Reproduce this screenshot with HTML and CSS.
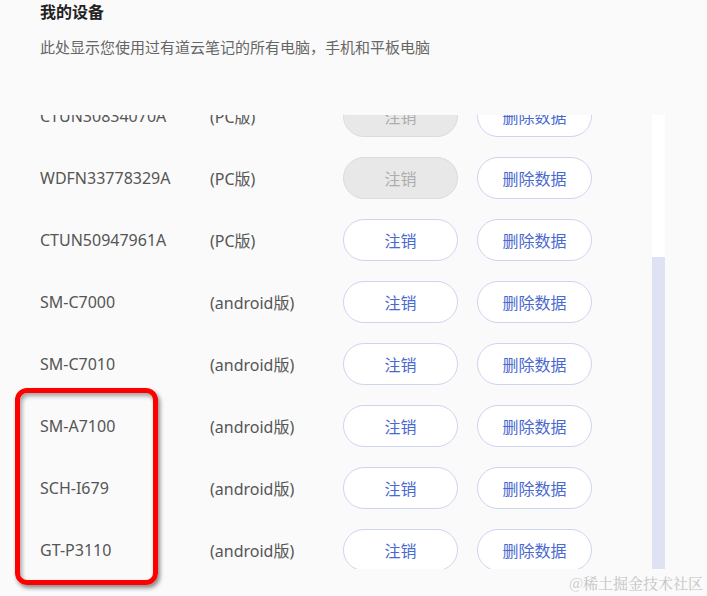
FILE: index.html
```html
<!DOCTYPE html>
<html lang="zh-CN">
<head>
  <meta charset="UTF-8">
  <title>我的设备</title>
  <link rel="stylesheet" href="styles.css">
</head>
<body>
  <header class="head">
    <h1>我的设备</h1>
    <p>此处显示您使用过有道云笔记的所有电脑，手机和平板电脑</p>
  </header>

  <div class="panel">
    <div class="viewport">
      <ul class="devices">
        <li><span class="name">CTUN30834070A</span><span class="kind">(PC版)</span><button class="off">注销</button><button>删除数据</button></li>
        <li><span class="name">WDFN33778329A</span><span class="kind">(PC版)</span><button class="off">注销</button><button>删除数据</button></li>
        <li><span class="name">CTUN50947961A</span><span class="kind">(PC版)</span><button>注销</button><button>删除数据</button></li>
        <li><span class="name">SM-C7000</span><span class="kind">(android版)</span><button>注销</button><button>删除数据</button></li>
        <li><span class="name">SM-C7010</span><span class="kind">(android版)</span><button>注销</button><button>删除数据</button></li>
        <li><span class="name">SM-A7100</span><span class="kind">(android版)</span><button>注销</button><button>删除数据</button></li>
        <li><span class="name">SCH-I679</span><span class="kind">(android版)</span><button>注销</button><button>删除数据</button></li>
        <li><span class="name">GT-P3110</span><span class="kind">(android版)</span><button>注销</button><button>删除数据</button></li>
      </ul>
    </div>
    <div class="track"><div class="thumb"></div></div>
  </div>

  <div class="mark"></div>
  <div class="watermark">@稀土掘金技术社区</div>
</body>
</html>
```

FILE: styles.css
```css
* { box-sizing: border-box; }
body {
  margin: 0; background: #fafafa; color: #555;
  font-family: "Noto Sans", "Noto Sans CJK SC", sans-serif;
  width: 707px; height: 596px; overflow: hidden; position: relative;
}
.head { padding: 0 0 0 40px; }
.head h1 {
  margin: 0; padding-top: 1px; font-size: 16px; font-weight: bold;
  color: #222; line-height: 22px;
}
.head p {
  margin: 13px 0 0; font-size: 15px; color: #666; line-height: 22px;
}
.panel { display: flex; margin-top: 57px; padding-left: 40px; }
.viewport { width: 612px; height: 454px; overflow: hidden; }
.devices { list-style: none; margin: -30px 0 0; padding: 0; }
.devices li { display: flex; align-items: center; height: 62px; font-size: 16px; }
.name { width: 170px; }
.kind { width: 133px; }
button {
  width: 115px; height: 42px; border-radius: 21px;
  border: 1px solid #cdd5f0; background: #fff; color: #4a69d0;
  font: inherit; font-size: 16px; padding: 0; margin-right: 19px;
}
button.off { background: #e8e8e8; border-color: #dcdcdc; color: #adadad; }
.track { width: 13px; height: 454px; background: #fff; padding-top: 142px; }
.thumb { height: 312px; background: #dfe2f2; }
.mark {
  position: absolute; left: 15px; top: 388px; width: 143px; height: 197px;
  border: 5px solid #f00; border-radius: 12px;
  box-shadow: 2px 3px 4px rgba(0, 0, 0, .45), inset 2px 3px 4px rgba(0, 0, 0, .35);
}
.watermark {
  position: absolute; right: 4px; bottom: 3px;
  font-size: 15px; color: #c4c4c4; font-family: "Noto Serif CJK SC", "Noto Sans CJK SC", serif;
}
```
